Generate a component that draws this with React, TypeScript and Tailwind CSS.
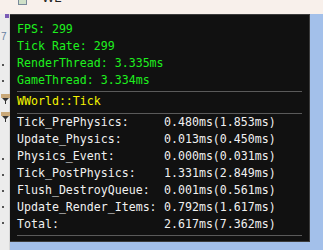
import React from "react";

const rows: [string, string][] = [
  ["Tick_PrePhysics:", "0.480ms(1.853ms)"],
  ["Update_Physics:", "0.013ms(0.450ms)"],
  ["Physics_Event:", "0.000ms(0.031ms)"],
  ["Tick_PostPhysics:", "1.331ms(2.849ms)"],
  ["Flush_DestroyQueue:", "0.001ms(0.561ms)"],
  ["Update_Render_Items:", "0.792ms(1.617ms)"],
  ["Total:", "2.617ms(7.362ms)"],
];

function Dot() {
  return <div className="w-[2px] h-[2px] bg-[#555] ml-[2px]" />;
}

function Tan() {
  return (
    <svg width="9" height="10" viewBox="0 0 9 10" className="ml-[1px]">
      <rect x="0" y="0" width="9" height="4" fill="#c9a878" />
      <path d="M1 4 L8 4 L5 7 L5 10 L4 10 L4 7 Z" fill="#333" />
    </svg>
  );
}

export default function App() {
  return (
    <div className="w-[323px] h-[250px] overflow-hidden bg-[#a3c0ea] flex flex-col">
      {/* top title strip */}
      <div className="h-[14px] bg-[#f8f0eb] flex items-start shrink-0 overflow-hidden pl-[18px] gap-[15px]">
        <div className="w-[9px] h-[5px] border-x border-b border-[#7a8a9a] bg-[#cfe0c8]" />
        <div className="-mt-[9px] text-[13px] leading-[13px] text-[#222] font-['Liberation_Sans',sans-serif]">WL</div>
      </div>
      <div className="flex flex-1">
        {/* left strip */}
        <div className="w-[10px] bg-[#ececec] border-r border-[#d8d8d8] shrink-0 flex flex-col">
          <div className="w-[4px] h-[4px] bg-[#7b5bb5] ml-[5px]" />
          <div className="mt-[14px] ml-[1px] text-[10px] leading-[10px] text-[#6680a0] font-['Liberation_Sans',sans-serif]">7</div>
          <div className="mt-[22px] flex flex-col gap-[14px]">
            <Dot />
            <Dot />
          </div>
          <div className="mt-[12px] flex flex-col gap-[8px]">
            <Tan />
            <Tan />
          </div>
          <div className="mt-[36px] flex flex-col gap-[14px]">
            <Dot />
            <Dot />
            <Dot />
            <Dot />
            <Dot />
          </div>
        </div>
        {/* panel */}
        <div className="flex flex-col">
          <div className="w-[300px] h-[228px] bg-[#111111] border-r border-b border-t border-[#3c3c3c] pt-[6px] pl-[7px] pr-[7px] font-['DejaVu_Sans_Mono',monospace] text-[11.6px] leading-[17px] whitespace-pre">
            <div className="text-[#1ef01e]">FPS: 299</div>
            <div className="text-[#1ef01e]">Tick Rate: 299</div>
            <div className="text-[#1ef01e]">RenderThread: 3.335ms</div>
            <div className="text-[#1ef01e]">GameThread: 3.334ms</div>
            <div className="h-px bg-[#5a5a5a] mt-[2px]" />
            <div className="text-[#f5f500] mt-[1px]">WWorld::Tick</div>
            <div className="h-px bg-[#5a5a5a] mt-[3px]" />
            <div className="text-[#f0f0f0]">
              {rows.map(([a, b]) => (
                <div key={a} className="flex">
                  <span className="w-[147px]">{a}</span>
                  <span>{b}</span>
                </div>
              ))}
            </div>
            <div className="h-px bg-[#5a5a5a] mt-[2px]" />
          </div>
        </div>
      </div>
    </div>
  );
}
